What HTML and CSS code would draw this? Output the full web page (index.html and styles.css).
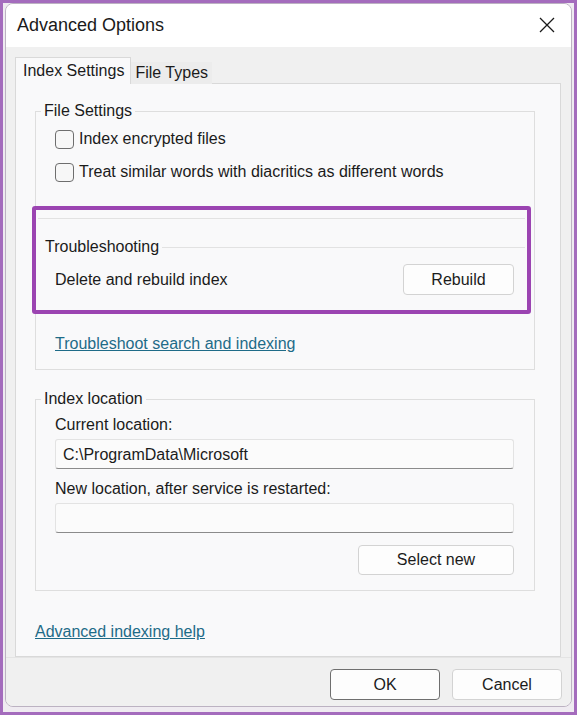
FILE: index.html
```html
<!DOCTYPE html>
<html>
<head>
<meta charset="utf-8">
<link rel="stylesheet" href="styles.css">
</head>
<body>
<div class="frame">
  <div class="window">
    <div class="titlebar">
      <span class="title">Advanced Options</span>
      <svg class="close" width="16" height="16" viewBox="0 0 16 16"><path d="M1 1 L15 15 M15 1 L1 15" stroke="#1a1a1a" stroke-width="1.3" fill="none"/></svg>
    </div>
    <div class="body">
      <div class="tabs">
        <div class="tab active">Index Settings</div>
        <div class="tab">File Types</div>
      </div>
      <div class="panel">
        <fieldset class="group group-file">
          <legend>File Settings</legend>
          <div class="check"><span class="box"></span>Index encrypted files</div>
          <div class="check second"><span class="box"></span>Treat similar words with diacritics as different words</div>
          <div class="divider"></div>
          <div class="subhead"><span>Troubleshooting</span><span class="rule"></span></div>
          <div class="row">
            <span>Delete and rebuild index</span>
            <button class="btn rebuild">Rebuild</button>
          </div>
          <a class="link trouble">Troubleshoot search and indexing</a>
          <div class="highlight"></div>
        </fieldset>
        <fieldset class="group group-loc">
          <legend>Index location</legend>
          <div class="label first">Current location:</div>
          <div class="field">C:\ProgramData\Microsoft</div>
          <div class="label">New location, after service is restarted:</div>
          <div class="field"></div>
          <div class="actions"><button class="btn select">Select new</button></div>
        </fieldset>
        <a class="link help">Advanced indexing help</a>
      </div>
    </div>
    <div class="footer">
      <button class="btn ok">OK</button>
      <button class="btn cancel">Cancel</button>
    </div>
  </div>
</div>
</body>
</html>
```
FILE: styles.css
```css
* { box-sizing: border-box; }
html, body { margin: 0; padding: 0; }
body {
  font-family: "Liberation Sans", Arial, sans-serif;
  font-size: 16px;
  color: #1b1b1b;
}
.frame {
  width: 577px;
  height: 715px;
  border: 3px solid #a46cbd;
  background: #efebf1;
  padding-left: 2px;
}
.window {
  width: 567px;
  height: 704px;
  border: 1px solid #bcb2c2;
  border-radius: 8px;
  background: #f0f0f0;
  overflow: hidden;
  display: flex;
  flex-direction: column;
}
.titlebar {
  height: 43px;
  background: #ffffff;
  display: flex;
  align-items: center;
  justify-content: space-between;
  padding: 0 16px 0 11px;
  flex: none;
}
.title { font-size: 18px; color: #1a1a1a; }
.close { display: block; margin-top: -2px; }
.body {
  padding: 10px 10px 0 9px;
  background: #f0f0f0;
}
.tabs {
  display: flex;
  align-items: flex-end;
  height: 27px;
  position: relative;
  z-index: 2;
}
.tab {
  height: 22px;
  line-height: 22px;
  padding: 0 4px;
  background: #ececec;
  white-space: nowrap;
}
.tab.active {
  height: 27px;
  line-height: 26px;
  padding: 0 6px 0 7px;
  background: #f9f9fa;
  border: 1px solid #d9d9d9;
  border-bottom: none;
}
.panel {
  margin-top: -1px;
  width: 546px;
  border: 1px solid #d9d9d9;
  background: #f9f9fa;
  padding: 17px 0 14px 19px;
  position: relative;
}
.group {
  margin: 0;
  padding: 0 0 15px 19px;
  border: 1px solid #dedede;
  width: 500px;
  min-width: 0;
  position: relative;
}
.group legend {
  margin-left: -14px;
  padding: 0 3px;
  line-height: 20px;
}
.check {
  display: flex;
  align-items: center;
  height: 24px;
  margin-top: 6px;
}
.check.second { margin-top: 9px; }
.box {
  width: 19px;
  height: 19px;
  border: 1px solid #6e6e6e;
  border-radius: 4px;
  background: #f7f7f7;
  margin-right: 5px;
  flex: none;
}
.divider {
  height: 1px;
  background: #e2e2e2;
  margin: 34px 9px 0 -17px;
}
.subhead {
  display: flex;
  align-items: center;
  height: 20px;
  margin: 18px 9px 0 -10px;
}
.subhead .rule {
  flex: 1;
  height: 1px;
  background: #e2e2e2;
  margin-left: 3px;
}
.row {
  display: flex;
  align-items: center;
  justify-content: space-between;
  margin: 7px 20px 0 0;
}
.btn {
  font: inherit;
  color: #1b1b1b;
  background: #fdfdfd;
  border: 1px solid #d3d3d3;
  border-radius: 4px;
  height: 31px;
  padding: 0;
}
.rebuild { width: 111px; }
.link {
  display: block;
  color: #1e6b88;
  text-decoration: underline;
  line-height: 20px;
  width: max-content;
}
.trouble { margin-top: 39px; }
.highlight {
  position: absolute;
  left: -4px;
  top: 85px;
  width: 499px;
  height: 108px;
  border: 4px solid #9b44b1;
  border-radius: 3px;
}
.group-loc { margin-top: 19px; }
.label { line-height: 20px; margin-top: 10px; }
.label.first { margin-top: 6px; }
.field {
  margin: 4px 20px 0 0;
  height: 30px;
  line-height: 29px;
  padding-left: 7px;
  background: #fbfbfb;
  border: 1px solid #e3e3e3;
  border-bottom-color: #8b8b8b;
  border-radius: 3px;
}
.actions {
  display: flex;
  justify-content: flex-end;
  margin: 12px 20px 0 0;
}
.select { width: 156px; height: 30px; }
.help { margin-top: 31px; }
.footer {
  flex: 1;
  background: #f0f0f0;
  border-top: 1px solid #e4e4e4;
  display: flex;
  justify-content: flex-end;
  gap: 12px;
  padding: 11px 9px 0 0;
}
.ok, .cancel { width: 110px; height: 31px; }
.ok { border-color: #6f6f6f; }
```
